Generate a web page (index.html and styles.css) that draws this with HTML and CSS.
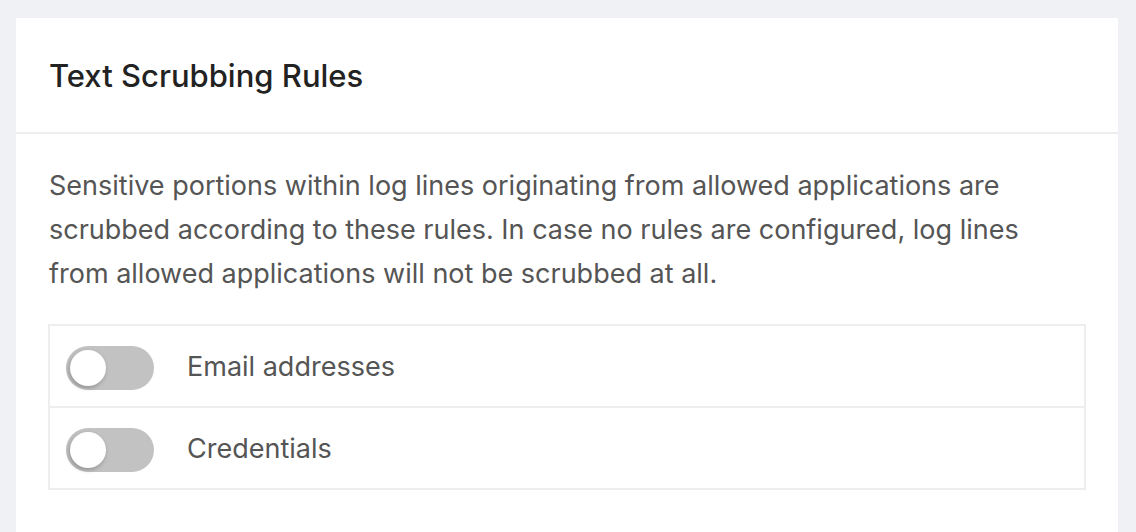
FILE: index.html
```html
<!DOCTYPE html>
<html>
<head>
<meta charset="utf-8">
<link rel="stylesheet" href="styles.css">
</head>
<body>
<div class="page">
  <section class="card">
    <header class="card-header">
      <h2 class="title">Text Scrubbing Rules</h2>
    </header>
    <div class="card-body">
      <p class="desc">Sensitive portions within log lines originating from allowed applications are scrubbed according to these rules. In case no rules are configured, log lines from allowed applications will not be scrubbed at all.</p>
      <ul class="rules">
        <li class="rule">
          <span class="toggle"><span class="knob"></span></span>
          <span class="label">Email addresses</span>
        </li>
        <li class="rule">
          <span class="toggle"><span class="knob"></span></span>
          <span class="label">Credentials</span>
        </li>
      </ul>
    </div>
  </section>
</div>
</body>
</html>
```

FILE: styles.css
```css
html, body {
  margin: 0;
  padding: 0;
  background: #f0f1f4;
  font-family: Inter, "Helvetica Neue", Arial, sans-serif;
  height: 100%;
  overflow: hidden;
}
.page {
  height: 100%;
  box-sizing: border-box;
  padding: 18px 18px 0 16px;
  display: flex;
  flex-direction: column;
}
.card {
  background: #fff;
  flex: 1;
}
.card-header {
  height: 114px;
  border-bottom: 2px solid #eeeeef;
  display: flex;
  align-items: center;
  padding: 0 33px;
}
.title {
  margin: 0;
  font-size: 31px;
  font-weight: 500;
  color: #222;
}
.card-body {
  padding: 30px 32px 0 32px;
}
.desc {
  margin: 0 0 28px 1px;
  font-size: 27px;
  line-height: 44px;
  color: #555;
  max-width: 1010px;
}
.rules {
  list-style: none;
  margin: 0;
  padding: 0;
  border: 2px solid #eeeeee;
}
.rule {
  height: 80px;
  display: flex;
  align-items: center;
  padding-left: 16px;
}
.rule + .rule {
  border-top: 2px solid #eeeeee;
}
.toggle {
  width: 88px;
  height: 44px;
  margin-top: 4px;
  border-radius: 22px;
  background: #c2c2c2;
  display: flex;
  align-items: center;
  padding-left: 4px;
  box-sizing: border-box;
}
.knob {
  width: 36px;
  height: 36px;
  border-radius: 50%;
  background: #fff;
  box-shadow: -1px 2px 4px rgba(0,0,0,0.25);
}
.label {
  margin-left: 33px;
  font-size: 27px;
  color: #555;
}
```
